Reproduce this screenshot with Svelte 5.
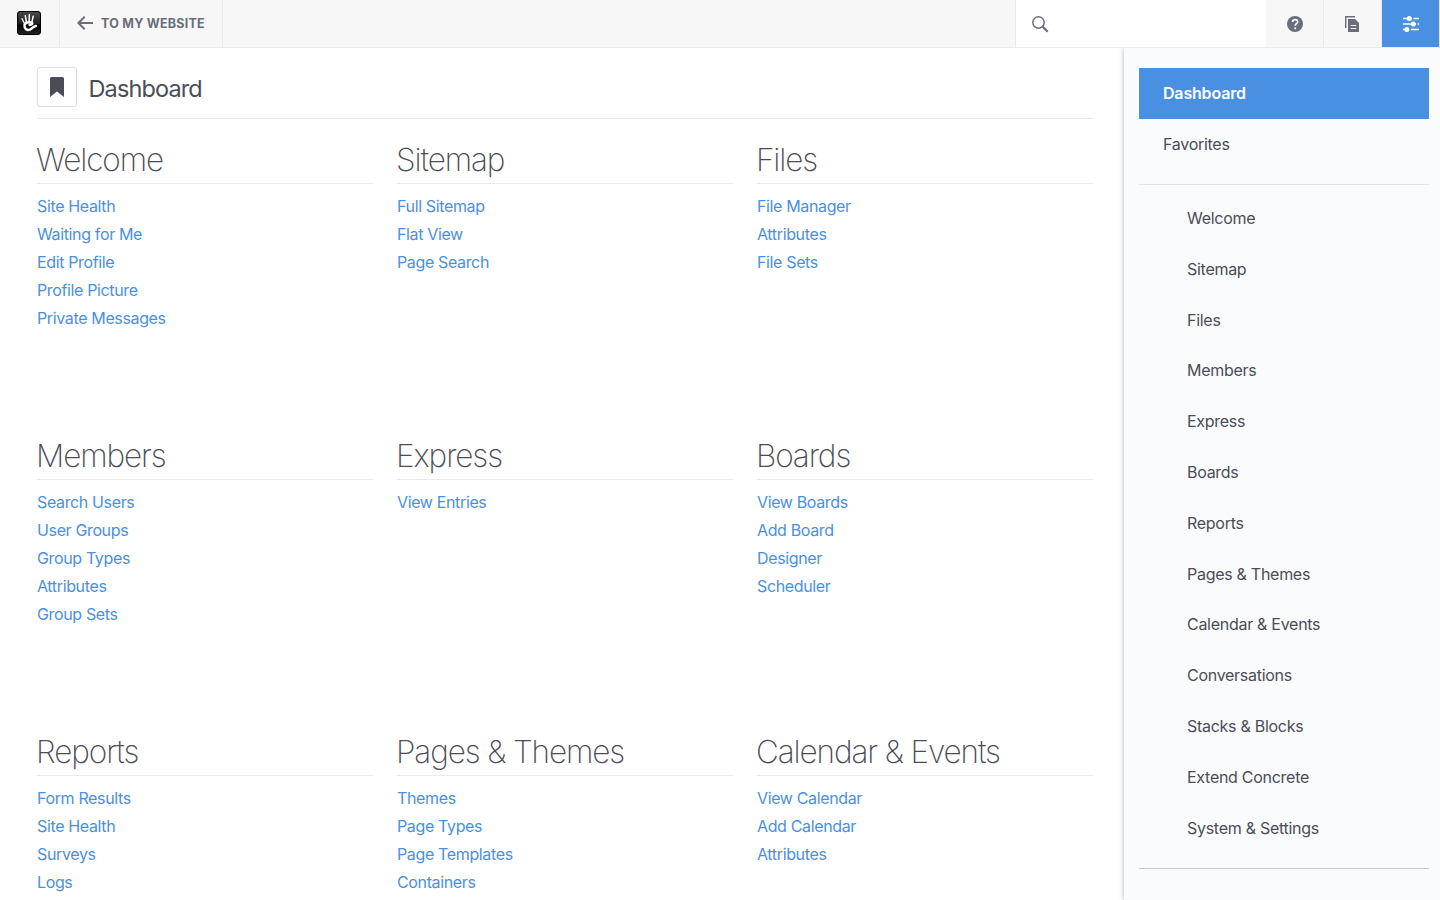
<script>
  const sections = [
    { title: 'Welcome', links: ['Site Health', 'Waiting for Me', 'Edit Profile', 'Profile Picture', 'Private Messages'] },
    { title: 'Sitemap', links: ['Full Sitemap', 'Flat View', 'Page Search'] },
    { title: 'Files', links: ['File Manager', 'Attributes', 'File Sets'] },
    { title: 'Members', links: ['Search Users', 'User Groups', 'Group Types', 'Attributes', 'Group Sets'] },
    { title: 'Express', links: ['View Entries'] },
    { title: 'Boards', links: ['View Boards', 'Add Board', 'Designer', 'Scheduler'] },
    { title: 'Reports', links: ['Form Results', 'Site Health', 'Surveys', 'Logs'] },
    { title: 'Pages & Themes', links: ['Themes', 'Page Types', 'Page Templates', 'Containers'] },
    { title: 'Calendar & Events', links: ['View Calendar', 'Add Calendar', 'Attributes'] }
  ];
  const nav = ['Welcome', 'Sitemap', 'Files', 'Members', 'Express', 'Boards', 'Reports', 'Pages & Themes',
    'Calendar & Events', 'Conversations', 'Stacks & Blocks', 'Extend Concrete', 'System & Settings'];
</script>

<div class="page">
  <header class="toolbar">
    <a class="logo" href="#home" aria-label="Home">
      <svg width="24" height="24" viewBox="0 0 24 24">
        <defs>
          <linearGradient id="tile" x1="0" y1="0" x2="0" y2="1">
            <stop offset="0" stop-color="#4a4a4a" />
            <stop offset=".5" stop-color="#222" />
            <stop offset=".6" stop-color="#050505" />
            <stop offset="1" stop-color="#222" />
          </linearGradient>
        </defs>
        <rect x=".5" y=".5" width="23" height="23" rx="2.5" fill="url(#tile)" stroke="#000" />
        <g stroke="#fff" stroke-linecap="round" fill="none">
          <path d="M5 7.600 7.200 12" stroke-width="1.300" />
          <path d="M8.300 4.800 9.400 10.500" stroke-width="1.500" />
          <path d="M12.300 3.800 12.100 10" stroke-width="1.500" />
          <path d="M16.200 5.200 15 10.500" stroke-width="1.500" />
        </g>
        <path d="M7.500 14.200C7.800 11.500 12 10.700 14.900 11.700c1 .9-.2 2.100-2.400 2.300M7.500 14.200c-.3 3.900 2.500 5.400 5.400 4.400 2.400-.8 2.900-3.300 5.900-3.700" fill="none" stroke="#fff" stroke-width="2.500" stroke-linecap="round" />
      </svg>
    </a>
    <a class="back" href="#site">
      <svg width="16" height="14" viewBox="0 0 16 14" fill="none" stroke="#6a6e7b" stroke-width="2">
        <path d="M16 7H1.500M7.700.7 1.400 7l6.300 6.300" />
      </svg>
      <span>TO MY WEBSITE</span>
    </a>
    <div class="search">
      <svg width="17" height="17" viewBox="0 0 17 17" fill="none" stroke="#6a6e7b">
        <circle cx="6.500" cy="6.500" r="5.700" stroke-width="1.500" />
        <path d="m10.700 10.700 5 5" stroke-width="2.100" />
      </svg>
    </div>
    <a class="tool" href="#help" aria-label="Help">
      <svg width="16" height="16" viewBox="0 0 16 16">
        <circle cx="8" cy="8" r="8" fill="#6a6e7b" />
        <path d="M5.500 6.100C5.500 4.300 6.600 3.600 8.100 3.600s2.600.8 2.600 2.200c0 1.800-2.500 1.900-2.500 3.900" fill="none" stroke="#f7f7f7" stroke-width="1.700" />
        <circle cx="8.200" cy="12.300" r="1.100" fill="#f7f7f7" />
      </svg>
    </a>
    <a class="tool files" href="#pages" aria-label="Pages">
      <svg width="14" height="16" viewBox="0 0 14 16">
        <path d="M.7 12V.7H10" fill="none" stroke="#6a6e7b" stroke-width="1.400" />
        <path d="M3 3h7l4 4v9H3Z" fill="#6a6e7b" />
        <path d="M5.700 9.500h5.600M5.700 12.500h5.600" stroke="#f7f7f7" stroke-width="1.200" />
      </svg>
    </a>
    <a class="tool active" href="#dashboard" aria-label="Dashboard">
      <svg width="16" height="16" viewBox="0 0 16 16" fill="#fff" stroke="#fff" stroke-width="1.600">
        <path d="M0 2.500h9M10.500 2.500H16M0 8h13M14.700 8H16M0 13.500h6M8 13.500h8" />
        <g stroke="none">
          <circle cx="6.300" cy="2.500" r="2.500" />
          <circle cx="10.300" cy="8" r="2.500" />
          <circle cx="3.900" cy="13.500" r="2.500" />
        </g>
      </svg>
    </a>
  </header>

  <div class="body">
    <main>
      <div class="title">
        <span class="bookmark">
          <svg width="14" height="20" viewBox="0 0 14 20"><path d="M1.500 0h11A1.500 1.500 0 0 1 14 1.500V20l-7-5.600L0 20V1.500A1.500 1.500 0 0 1 1.500 0Z" fill="#4a4d57" /></svg>
        </span>
        <h1>Dashboard</h1>
      </div>
      <div class="grid">
        {#each sections as section}
          <section>
            <h2>{section.title}</h2>
            <ul>
              {#each section.links as link}
                <li><a href="#link">{link}</a></li>
              {/each}
            </ul>
          </section>
        {/each}
      </div>
    </main>
    <aside>
      <a class="item current" href="#dashboard">Dashboard</a>
      <a class="item" href="#favorites">Favorites</a>
      <hr />
      <nav>
        {#each nav as item}
          <a class="item sub" href="#nav">{item}</a>
        {/each}
      </nav>
      <hr class="last" />
    </aside>
  </div>
</div>

<style>
  :global(body) { margin: 0; overflow: hidden; }
  .page {
    height: 900px;
    display: flex;
    flex-direction: column;
    overflow: hidden;
    background: #fff;
    color: #4a4d57;
    font: 400 16px/24px Inter, sans-serif;
  }
  a { text-decoration: none; color: inherit; }
  svg { display: block; flex: none; }
  .toolbar {
    box-sizing: border-box;
    height: 48px;
    flex: none;
    display: flex;
    background: #f7f7f7;
    border-bottom: 1px solid #e9eaec;
  }
  .logo {
    box-sizing: border-box;
    width: 60px;
    padding: 11px 0 0 17px;
    border-right: 1px solid #e9eaec;
  }
  .back {
    box-sizing: border-box;
    width: 163px;
    display: flex;
    align-items: center;
    gap: 8px;
    padding: 0 0 1px 17px;
    border-right: 1px solid #e9eaec;
    color: #6a6e7b;
    font-size: 12.500px;
    font-weight: 650;
    letter-spacing: .24px;
    white-space: nowrap;
  }
  .back span { padding-top: 2px; }
  .search {
    box-sizing: border-box;
    width: 251px;
    margin-left: auto;
    padding: 16px 0 0 16px;
    background: #fff;
    border-left: 1px solid #e9eaec;
  }
  .tool {
    box-sizing: border-box;
    width: 58px;
    display: flex;
    align-items: center;
    justify-content: center;
    padding-top: 1px;
    border-right: 1px solid #e9eaec;
  }
  .files { padding-right: 1px; }
  .active { background: #4a90e2; }
  .body { flex: 1; min-height: 0; display: flex; }
  main { flex: 1; padding: 19px 31px 0 37px; }
  .title {
    display: flex;
    gap: 12px;
    height: 51px;
    border-bottom: 1px solid #e9eaec;
  }
  .bookmark {
    box-sizing: border-box;
    width: 40px;
    height: 40px;
    display: grid;
    place-items: center;
    border: 1px solid #dcdde0;
    border-radius: 3px;
  }
  h1 { margin: 7px 0 0; font-size: 23.500px; line-height: 29px; font-weight: 400; letter-spacing: -.88px; text-indent: -.5px; }
  .grid {
    display: grid;
    grid-template-columns: repeat(3, 336px);
    grid-auto-rows: 296px;
    column-gap: 24px;
    padding-top: 21px;
  }
  h2 {
    margin: 0;
    height: 43px;
    border-bottom: 1px solid #e9eaec;
    font-size: 31.500px;
    line-height: 39px;
    font-weight: 230;
    letter-spacing: -1.100px;
    text-indent: -1px;
  }
  ul { list-style: none; margin: 0; padding: 8px 0 0; }
  li { height: 28px; line-height: 28px; color: #4a90e2; letter-spacing: -.36px; }
  aside {
    box-sizing: border-box;
    width: 316px;
    padding: 20px 11px 0 15px;
    background: #fafbfd;
    box-shadow: 0 0 5px rgba(0, 0, 0, .3);
    clip-path: inset(0 0 0 -8px);
  }
  .item {
    display: block;
    padding: 15px 24px;
    line-height: 20.8px;
    letter-spacing: -.28px;
  }
  .sub { padding-left: 48px; }
  .current { background: #4a90e2; color: #fff; font-weight: 600; letter-spacing: -.18px; }
  hr { margin: 14.400px 0 8px; border: 0; border-top: 1px solid #e3e5e8; }
  .last { border-color: #c6c8cc; }
</style>
